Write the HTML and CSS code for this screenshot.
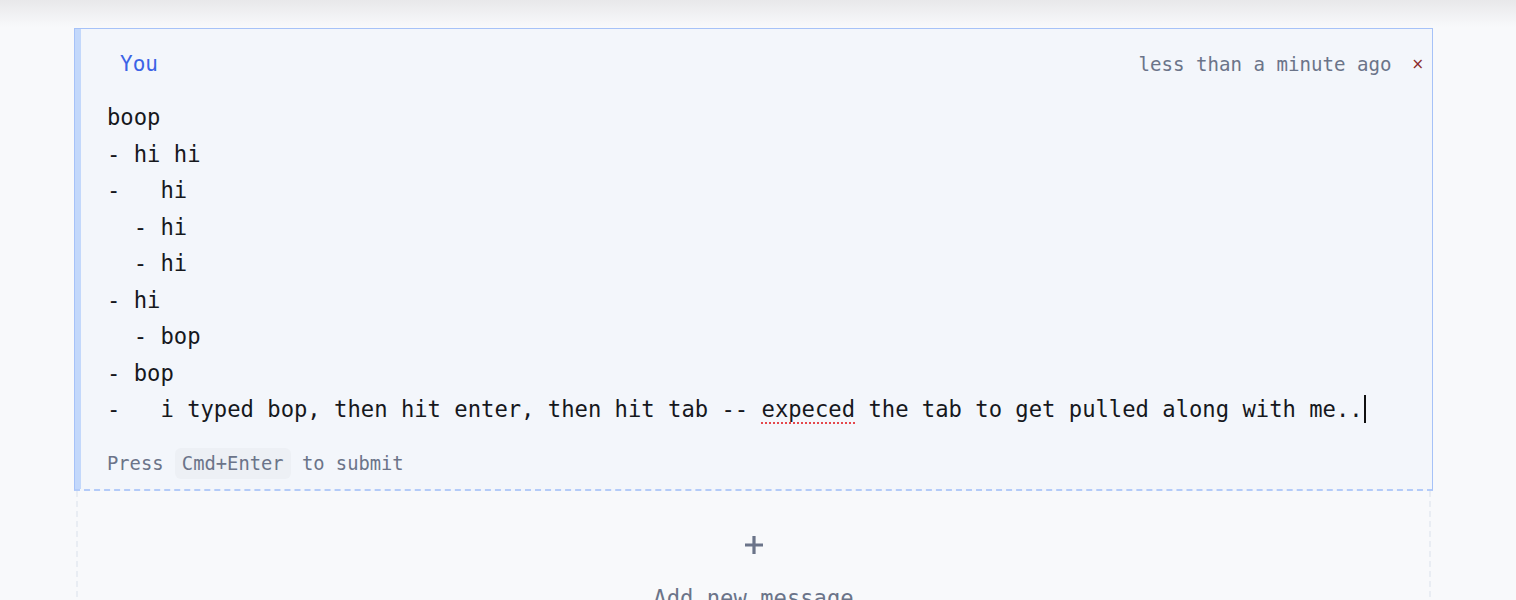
FILE: index.html
```html
<!DOCTYPE html>
<html>
<head>
<meta charset="utf-8">
<link rel="stylesheet" href="styles.css">
</head>
<body>
<div class="page">
  <div class="card">
    <div class="card-head">
      <span class="author">You</span>
      <span class="spacer"></span>
      <span class="time">less than a minute ago</span>
      <span class="close">×</span>
    </div>
    <div class="editor"><div class="line">boop</div><div class="line">- hi hi</div><div class="line">-   hi</div><div class="line">  - hi</div><div class="line">  - hi</div><div class="line">- hi</div><div class="line">  - bop</div><div class="line">- bop</div><div class="line">-   i typed bop, then hit enter, then hit tab -- <span class="misspelt">expeced</span> the tab to get pulled along with me..<span class="caret"></span></div></div>
    <div class="hint">Press <kbd class="key">Cmd+Enter</kbd> to submit</div>
  </div>
  <div class="add-box">
    <svg class="plus" width="20" height="20" viewBox="0 0 20 20"><path d="M10 1v18M1 10h18" stroke="#6b7489" stroke-width="3.2" fill="none"/></svg>
    <div class="add-label">Add new message</div>
  </div>
</div>
</body>
</html>
```
FILE: styles.css
```css
html, body {
  margin: 0;
  padding: 0;
}
body {
  background: linear-gradient(#e8e8ea, #f8f9fb 27px) no-repeat, #f8f9fb;
  font-family: "DejaVu Sans Mono", "Liberation Mono", monospace;
  height: 600px;
  overflow: hidden;
}
.page {
  padding: 28px 0 0 74px;
  width: 1359px;
}
.card {
  background: #f3f6fb;
  border: 1px solid #a6c2f8;
  border-bottom: 2px dashed #b3cbf9;
  box-shadow: inset 6px 0 0 #c3d8fb;
}
.card-head {
  display: flex;
  align-items: center;
  height: 70px;
  padding: 0 8px 0 45px;
}
.author {
  color: #3b63e6;
  font-size: 21px;
}
.spacer {
  flex: 1;
}
.time {
  color: #6b7489;
  font-size: 19.1px;
}
.close {
  color: #8a2a2a;
  font-size: 15px;
  margin-left: 20px;
  font-family: "DejaVu Sans", sans-serif;
}
.editor {
  padding-left: 32px;
  font-size: 22.2px;
  line-height: 36.5px;
  color: #16181d;
  white-space: pre;
}
.misspelt {
  text-decoration: underline dotted #e5484d;
  text-decoration-thickness: 2px;
  text-underline-offset: 5px;
}
.caret {
  display: inline-block;
  width: 2px;
  height: 28px;
  background: #111;
  vertical-align: -6px;
  margin-left: 1px;
}
.hint {
  margin-top: 20px;
  padding: 0 0 10px 32px;
  line-height: 30px;
  font-size: 18.8px;
  color: #6b7489;
}
.key {
  font-family: inherit;
  font-size: inherit;
  background: #edf0f5;
  border-radius: 6px;
  padding: 0 7px;
  display: inline-block;
  line-height: 31px;
}
.add-box {
  margin: 0 2px;
  border: 2px dashed #e9edf3;
  border-top: none;
  display: flex;
  flex-direction: column;
  align-items: center;
  padding-top: 44px;
  height: 200px;
}
.plus {
  display: block;
}
.add-label {
  margin-top: 30px;
  font-size: 22.2px;
  color: #6b7489;
}
```
